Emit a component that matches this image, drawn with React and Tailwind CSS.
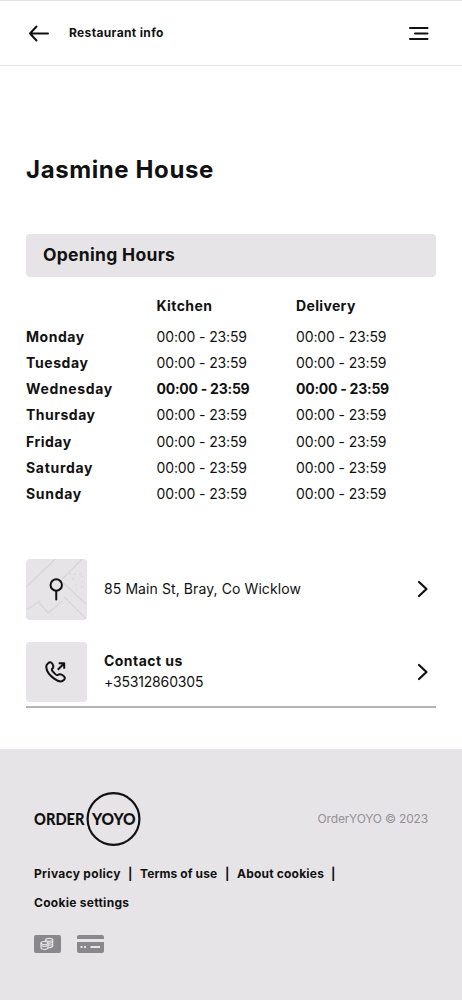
import React from 'react';

const hours = [
	{ day: 'Monday', dayClass: 'tracking-[0.55px]' },
	{ day: 'Tuesday', dayClass: 'tracking-[0.6px]' },
	{ day: 'Wednesday', dayClass: 'tracking-[0.65px]', today: true },
	{ day: 'Thursday', dayClass: 'tracking-[0.5px]' },
	{ day: 'Friday', dayClass: 'tracking-[0.5px]' },
	{ day: 'Saturday', dayClass: 'tracking-[0.7px]' },
	{ day: 'Sunday', dayClass: 'tracking-[0.7px]' },
];

const OPEN_TIME = '00:00 - 23:59';

function Header() {
	return (
		<header className="flex h-[66px] items-center border-y border-t-[#dfdfdf] border-b-[#e4e4e4] pl-7 pr-[33px]">
			<button aria-label="Back" className="w-[22px]">
				<svg width="22" height="18" viewBox="0 0 22 18" fill="none" stroke="#111" strokeWidth="2" strokeLinecap="round" strokeLinejoin="round">
					<path d="M20 9.5H2M8.5 2.5L2 9.5l6.5 7" />
				</svg>
			</button>
			<h2 className="ml-[19px] text-[12px] font-bold tracking-[0.35px]">Restaurant info</h2>
			<button aria-label="Menu" className="ml-auto">
				<svg width="22" height="14" viewBox="0 0 22 14" fill="none" stroke="#111" strokeWidth="2" strokeLinecap="round">
					<path d="M3 2h17.5M8 7.5h12.5M3 13h17.5" />
				</svg>
			</button>
		</header>
	);
}

function OpeningHours() {
	return (
		<section>
			<div className="flex h-[42.5px] items-center rounded-[4px] bg-[#e6e4e7] pb-px pl-[17px]">
				<h3 className="text-[17.5px] font-bold tracking-[0.3px]">Opening Hours</h3>
			</div>
			<div className="mt-[16.5px] grid grid-cols-[130.5px_139.5px_1fr] text-[14px] leading-[26.25px]">
				<span />
				<span className="mb-1 h-[26.5px] font-bold tracking-[0.4px]">Kitchen</span>
				<span className="mb-1 h-[26.5px] font-bold tracking-[0.35px]">Delivery</span>
				{hours.map(({ day, dayClass, today }) => (
					<React.Fragment key={day}>
						<span className={`font-bold ${dayClass}`}>{day}</span>
						<span className={today ? 'font-bold tracking-[-0.25px]' : 'tracking-[-0.13px]'}>{OPEN_TIME}</span>
						<span className={today ? 'font-bold tracking-[-0.25px]' : 'tracking-[-0.13px]'}>{OPEN_TIME}</span>
					</React.Fragment>
				))}
			</div>
		</section>
	);
}

function Chevron() {
	return (
		<svg className="ml-auto mr-[7px]" width="12" height="18" viewBox="0 0 12 18" fill="none" stroke="#111" strokeWidth="2.2" strokeLinecap="round" strokeLinejoin="round">
			<path d="M2 2l7.5 7L2 16" />
		</svg>
	);
}

function MapTile() {
	return (
		<svg className="rounded-[4px] bg-[#e6e4e7]" width="60.5" height="61" viewBox="0 0 60 61" fill="none">
			<g stroke="#d6d5d8" strokeWidth="1.4">
				<path d="M0 28L29 0M0 51l14-9M13 44l9 10 14-12M36 20L56 0M38 38l22 22M37 24l23 21" />
				<path d="M43 15h13v15M46 20h5M49 26h4" strokeDasharray="1.5 3.5" />
			</g>
			<g stroke="#111" strokeWidth="2" strokeLinecap="round">
				<circle cx="30" cy="26" r="5.7" />
				<path d="M30 32v8.5" />
			</g>
		</svg>
	);
}

function PhoneTile() {
	return (
		<div className="flex h-[60px] w-[60.5px] items-center justify-center rounded-[4px] bg-[#e6e4e7]">
			<svg width="22" height="22" viewBox="0 0 22 22" fill="none" stroke="#111" strokeWidth="2" strokeLinecap="round" strokeLinejoin="round">
				<path d="M3.1 2.2C5 .5 7 1.2 8 4c.7 1.9.3 2.8-.6 3.5-1 .8-.6 1.8 1 3.7 1.8 2.2 3.2 3.4 4.2 2.8 1.2-.8 2-1.3 4-.3 3.2 1.5 4 3.4 2.4 5.2-2 2.2-5.9 1.6-9.8-1.3C4.5 14.2 1.6 10 1.3 6.4 1.1 4.5 1.7 3.2 3.1 2.2z" />
				<path d="M13.5 8L19 2.5M14.7 2.2h4.5v4.5" strokeLinecap="square" />
			</svg>
		</div>
	);
}

function Logo() {
	return (
		<svg width="108" height="56" viewBox="0 0 108 56" aria-label="OrderYOYO">
			<circle cx="79.5" cy="28" r="25.9" fill="none" stroke="#111" strokeWidth="2.2" />
			<g fill="#111" fontFamily="Lato, sans-serif" fontWeight="900" fontSize="16.5">
				<text x="0" y="34" textLength="50.5" lengthAdjust="spacingAndGlyphs">ORDER</text>
				<text x="58" y="34" textLength="43.5" lengthAdjust="spacingAndGlyphs">YOYO</text>
			</g>
		</svg>
	);
}

function CashIcon() {
	return (
		<svg width="27" height="18" viewBox="0 0 27 18">
			<rect width="27" height="18" rx="2" fill="#89878b" />
			<g fill="#89878b" stroke="#e6e4e7" strokeWidth="1.2">
				<path d="M11.5 4.8v6.5c0 2.2 7.2 1.7 7.2-.5V4.8" />
				<ellipse cx="15.1" cy="4.8" rx="3.6" ry="1.5" />
				<path d="M12 7.3c1 1.3 6 1 6.7-.4M14 10c2 .4 4-.1 4.7-.9" />
				<path d="M7 8v4.8c0 2.2 7 1.9 7 0V8" />
				<ellipse cx="10.5" cy="8" rx="3.5" ry="1.5" />
				<path d="M7 10.4c1 1.4 6 1.3 7 0" />
			</g>
		</svg>
	);
}

function CardIcon() {
	return (
		<svg width="27" height="18" viewBox="0 0 27 18">
			<path d="M0 4V2a2 2 0 012-2h23a2 2 0 012 2v2zM0 7h27v9a2 2 0 01-2 2H2a2 2 0 01-2-2z" fill="#89878b" />
			<path d="M3.5 12h2M7 12h2M13.5 12H23" stroke="#e6e4e7" strokeWidth="1.8" />
		</svg>
	);
}

function Footer() {
	return (
		<footer className="h-[251px] bg-[#e6e4e7] px-[34px] pt-[42px]">
			<div className="flex items-center justify-between">
				<Logo />
				<span className="text-[12px] tracking-[-0.17px] text-[#929094]">OrderYOYO © 2023</span>
			</div>
			<nav className="mt-3 flex flex-wrap text-[12px] font-bold leading-[29px]">
				<a className="w-[94px] tracking-[0.3px]">Privacy policy</a>
				<span className="w-3">|</span>
				<a className="w-[85px] tracking-[0.1px]">Terms of use</a>
				<span className="w-3">|</span>
				<a className="w-[94px] tracking-[0.2px]">About cookies</a>
				<span className="w-3">|</span>
				<a className="w-full tracking-[0.28px]">Cookie settings</a>
			</nav>
			<div className="mt-[18px] flex gap-4">
				<CashIcon />
				<CardIcon />
			</div>
		</footer>
	);
}

export default function App() {
	return (
		<div className="h-[1000px] w-[462px] overflow-hidden bg-white font-['Inter',sans-serif] text-[#111]">
			<Header />
			<main className="h-[683px] px-[26px] pt-[86px]">
				<h1 className="mb-[46px] text-[24px] font-bold leading-9 tracking-[0.6px]">Jasmine House</h1>
				<OpeningHours />
				<div className="mt-[51.5px] flex h-[61px] items-center">
					<MapTile />
					<span className="ml-[17.5px] pb-px text-[14px] tracking-[0.09px]">85 Main St, Bray, Co Wicklow</span>
					<Chevron />
				</div>
				<div className="mt-[22px] flex items-center border-b-2 border-[#b4b4b4] pb-1">
					<PhoneTile />
					<div className="ml-[17.5px] text-[14px] leading-[20.5px]">
						<p className="font-bold tracking-[0.45px]">Contact us</p>
						<p className="tracking-[-0.17px]">+35312860305</p>
					</div>
					<Chevron />
				</div>
			</main>
			<Footer />
		</div>
	);
}
